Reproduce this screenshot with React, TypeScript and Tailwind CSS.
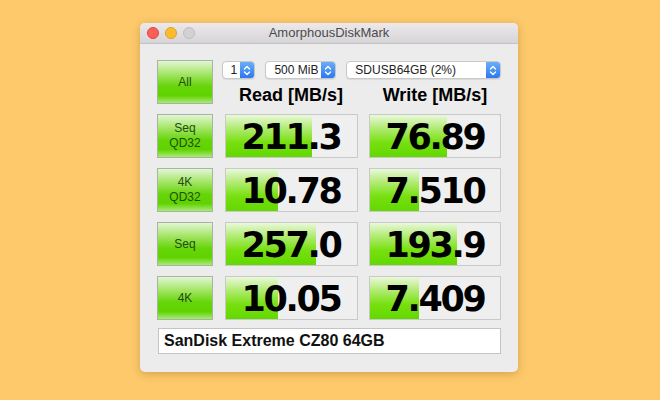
const ui = '"Liberation Sans", Arial, sans-serif'
const num = '"DejaVu Sans", Verdana, sans-serif'

type Row = { label: string[]; read: string; readPct: number; write: string; writePct: number }

const rows: Row[] = [
  { label: ['Seq', 'QD32'], read: '211.3', readPct: 66, write: '76.89', writePct: 59 },
  { label: ['4K', 'QD32'], read: '10.78', readPct: 40, write: '7.510', writePct: 38 },
  { label: ['Seq'], read: '257.0', readPct: 69, write: '193.9', writePct: 67 },
  { label: ['4K'], read: '10.05', readPct: 40, write: '7.409', writePct: 38 },
]

function GreenButton({ lines }: { lines: string[] }) {
  return (
    <div className="h-[44px] border border-[#a9b3a4] bg-[linear-gradient(to_bottom,#e2f6d4_0%,#a6e66a_30%,#66d50a_60%,#5fd300_82%,#a9ea76_100%)] flex flex-col items-center justify-center text-[12px] leading-[15px] text-[#1f4d0c]">
      {lines.map((l) => (
        <span key={l}>{l}</span>
      ))}
    </div>
  )
}

function Cell({ value, pct }: { value: string; pct: number }) {
  return (
    <div className="relative h-[44px] border border-[#c9c9c9] bg-[#efefef] overflow-hidden">
      <div
        className="absolute left-0 top-0 bottom-0 bg-[linear-gradient(to_bottom,#eaf8dc_0%,#b4ec78_30%,#78e010_65%,#62d800_100%)]"
        style={{ width: `${pct}%` }}
      />
      <div
        className="relative h-full flex items-center justify-center pt-[3px] text-[35px] font-bold tracking-[-2.3px] text-black"
        style={{ fontFamily: num }}
      >
        {value}
      </div>
    </div>
  )
}

function Select({ text, width }: { text: string; width: string }) {
  return (
    <div className={`${width} h-[18px] flex rounded-[4px] border border-[#c8c8c8] bg-white overflow-hidden shadow-[0_1px_1px_rgba(0,0,0,0.08)]`}>
      <span className="flex-1 pl-[8px] text-[12px] leading-[16px] text-[#222] whitespace-nowrap">{text}</span>
      <span className="w-[14px] bg-[linear-gradient(to_bottom,#6aaef9,#2c78ef)] flex items-center justify-center">
        <svg width="8" height="11" viewBox="0 0 8 11" fill="none" stroke="white" strokeWidth="1.4" strokeLinecap="round" strokeLinejoin="round">
          <path d="M1.5 4 L4 1.5 L6.5 4" />
          <path d="M1.5 7 L4 9.5 L6.5 7" />
        </svg>
      </span>
    </div>
  )
}

export default function App() {
  return (
    <div className="w-[660px] h-[400px] bg-[#fdc96b] pl-[140px] pt-[23px]" style={{ fontFamily: ui }}>
      <div className="w-[378px] rounded-[5px] bg-[#ececec] shadow-[0_2px_8px_rgba(120,80,0,0.3)] overflow-hidden">
        <div className="relative h-[21px] bg-[linear-gradient(to_bottom,#ebe9eb,#d6d4d6)] border-b border-[#c4c2c4] flex items-center justify-center">
          <div className="absolute left-[7px] top-[4px] flex gap-[6px]">
            <span className="w-[12px] h-[12px] rounded-full bg-[#fc5f57] border border-[#e0443e]" />
            <span className="w-[12px] h-[12px] rounded-full bg-[#fdbc2e] border border-[#dea123]" />
            <span className="w-[12px] h-[12px] rounded-full bg-[#d3d1d3] border border-[#bfbdbf]" />
          </div>
          <span className="text-[13px] text-[#4b4b4b]">AmorphousDiskMark</span>
        </div>

        <div className="px-[17px] pt-[16px] pb-[18px]">
          <div className="grid grid-cols-[56px_133px_132px] gap-x-[11.5px] gap-y-[10px]">
            <GreenButton lines={['All']} />
            <div className="col-span-2 h-[44px] flex flex-col">
              <div className="flex gap-[10px] -ml-[3px] mt-[1px]">
                <Select text="1" width="w-[34px]" />
                <Select text="500 MiB" width="w-[71px]" />
                <Select text="SDUSB64GB (2%)" width="w-[155px]" />
              </div>
              <div className="grid grid-cols-[133px_132px] gap-x-[11.5px] mt-[6px] text-[18px] font-bold text-black leading-[20px]">
                <span className="text-center">Read [MB/s]</span>
                <span className="text-center">Write [MB/s]</span>
              </div>
            </div>
            {rows.map((r) => (
              <div key={r.read} className="contents">
                <GreenButton lines={r.label} />
                <Cell value={r.read} pct={r.readPct} />
                <Cell value={r.write} pct={r.writePct} />
              </div>
            ))}
          </div>
          <div className="mt-[8px] ml-[1px] h-[26px] border border-[#c4c4c4] bg-white flex items-center pl-[5px] text-[16px] font-bold text-[#111]">
            SanDisk Extreme CZ80 64GB
          </div>
        </div>
      </div>
    </div>
  )
}
